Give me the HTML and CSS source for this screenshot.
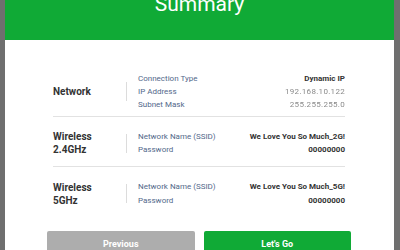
FILE: index.html
```html
<!DOCTYPE html>
<html>
<head>
<meta charset="utf-8">
<link rel="stylesheet" href="styles.css">
</head>
<body>
<div class="panel">
  <div class="header"><h1 class="title">Summary</h1></div>
  <div class="content">
    <div class="row row-first">
      <div class="name">Network</div>
      <div class="sep"></div>
      <div class="labels">
        <div>Connection Type</div>
        <div>IP Address</div>
        <div>Subnet Mask</div>
      </div>
      <div class="values">
        <div>Dynamic IP</div>
        <div class="blur">192.168.10.122</div>
        <div class="blur">255.255.255.0</div>
      </div>
    </div>
    <div class="row">
      <div class="name">Wireless<br>2.4GHz</div>
      <div class="sep"></div>
      <div class="labels">
        <div>Network Name (SSID)</div>
        <div>Password</div>
      </div>
      <div class="values">
        <div>We Love You So Much_2G!</div>
        <div>00000000</div>
      </div>
    </div>
    <div class="row row-last">
      <div class="name">Wireless<br>5GHz</div>
      <div class="sep"></div>
      <div class="labels">
        <div>Network Name (SSID)</div>
        <div>Password</div>
      </div>
      <div class="values">
        <div>We Love You So Much_5G!</div>
        <div>00000000</div>
      </div>
    </div>
  </div>
  <div class="buttons">
    <button class="btn btn-prev">Previous</button>
    <button class="btn btn-go">Let's Go</button>
  </div>
</div>
</body>
</html>
```
FILE: styles.css
```css
html, body {
  margin: 0;
  padding: 0;
  height: 250px;
  overflow: hidden;
}
body {
  background: #6f6f6f;
  font-family: Roboto, "Liberation Sans", sans-serif;
}
.panel {
  margin-left: 5px;
  width: 389px;
  height: 250px;
  background: #fff;
}
.header {
  height: 40px;
  background: #10aa36;
  overflow: hidden;
}
.title {
  margin: -6px 0 0;
  font-size: 21px;
  line-height: 21px;
  font-weight: 400;
  color: #fff;
  text-align: center;
}
.content {
  padding: 0 49px 0 48px;
}
.row {
  display: flex;
  align-items: center;
  padding: 13px 0 10px;
  border-top: 1px solid #e2e2e2;
}
.row-first {
  border-top: none;
  padding: 31.7px 0 4px;
}
.row-last {
  padding-bottom: 0;
}
.name {
  width: 73px;
  font-size: 10px;
  line-height: 13px;
  font-weight: 700;
  color: #333;
}
.sep {
  width: 1px;
  height: 19px;
  background: #dcdcdc;
  margin-right: 11px;
}
.labels {
  flex: 1;
  font-size: 8px;
  line-height: 13.33px;
  color: #52688a;
}
.values {
  text-align: right;
  font-size: 8px;
  line-height: 13.33px;
  font-weight: 700;
  color: #333;
}
.blur {
  color: #8a8a8a;
  font-weight: 400;
  filter: blur(0.6px);
  letter-spacing: 0.3px;
}
.buttons {
  display: flex;
  gap: 9px;
  padding: 0 43px 0 42px;
  margin-top: 24px;
}
.btn {
  flex: 1;
  height: 26px;
  border: none;
  border-radius: 2px;
  font-family: Roboto, "Liberation Sans", sans-serif;
  font-size: 9px;
  font-weight: 700;
  color: #fff;
  padding: 0;
}
.btn-prev {
  background: #adadad;
}
.btn-go {
  background: #10aa36;
}
```
